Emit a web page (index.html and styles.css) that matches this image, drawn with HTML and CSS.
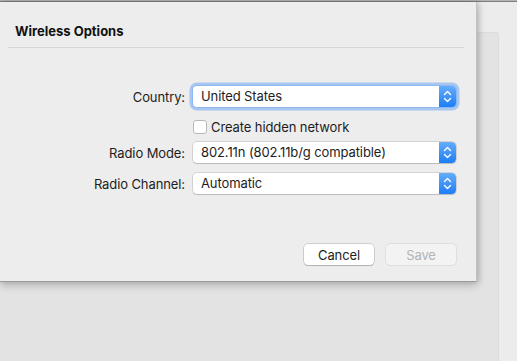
FILE: index.html
```html
<!DOCTYPE html>
<html>
<head>
<title>Wireless Options</title>
<link rel="stylesheet" href="styles.css">
</head>
<body>
    <div class="window">
        <div class="window-content">
            <div class="panel"></div>
        </div>
    </div>

    <div class="sheet">
        <h1 class="sheet-title">Wireless Options</h1>
        <div class="separator"></div>

        <div class="form">
            <div class="row row-country">
                <label class="label">Country:</label>
                <div class="popup focused">
                    <span class="popup-value">United States</span>
                    <span class="popup-arrows">
                        <svg width="17" height="21" viewBox="0 0 17 21"><path d="M5.5 8.5 L8.5 5.5 L11.5 8.5 M5.5 12.5 L8.5 15.5 L11.5 12.5" fill="none" stroke="#fff" stroke-width="1.4" stroke-linecap="round" stroke-linejoin="round"/></svg>
                    </span>
                </div>
            </div>
            <div class="row row-check">
                <span class="label"></span>
                <label class="check">
                    <span class="checkbox"></span>
                    <span>Create hidden network</span>
                </label>
            </div>
            <div class="row row-mode">
                <label class="label">Radio Mode:</label>
                <div class="popup">
                    <span class="popup-value">802.11n (802.11b/g compatible)</span>
                    <span class="popup-arrows">
                        <svg width="17" height="21" viewBox="0 0 17 21"><path d="M5.5 8.5 L8.5 5.5 L11.5 8.5 M5.5 12.5 L8.5 15.5 L11.5 12.5" fill="none" stroke="#fff" stroke-width="1.4" stroke-linecap="round" stroke-linejoin="round"/></svg>
                    </span>
                </div>
            </div>
            <div class="row row-channel">
                <label class="label">Radio Channel:</label>
                <div class="popup">
                    <span class="popup-value">Automatic</span>
                    <span class="popup-arrows">
                        <svg width="17" height="21" viewBox="0 0 17 21"><path d="M5.5 8.5 L8.5 5.5 L11.5 8.5 M5.5 12.5 L8.5 15.5 L11.5 12.5" fill="none" stroke="#fff" stroke-width="1.4" stroke-linecap="round" stroke-linejoin="round"/></svg>
                    </span>
                </div>
            </div>
        </div>

        <div class="buttons">
            <button class="button">Cancel</button>
            <button class="button disabled" disabled>Save</button>
        </div>
    </div>
</body>
</html>
```

FILE: styles.css
```css
/**
 * Generic styles
 */
* {
    box-sizing: border-box;
}
body {
    margin: 0;
    width: 517px;
    height: 361px;
    overflow: hidden;
    background-color: #ececec;
    font-family: "Inter", "Liberation Sans", sans-serif;
    font-size: 13px;
    letter-spacing: -0.1px;
    color: #1d1d1d;
}

/**
 * Window behind the sheet
 */
.window {
    height: 361px;
    border-top: 1px solid #b4b4b4;
    box-shadow: inset 0 1px 0 #808080;
}
.window-content {
    padding: 31px 18px 0 0;
}
.panel {
    height: 330px;
    background-color: #e3e3e3;
    border-top: 1px solid #dcdcdc;
    border-right: 1px solid #dcdcdc;
    border-radius: 0 4px 0 0;
}

/**
 * The sheet lies over the window
 */
.sheet {
    position: absolute;
    left: 0;
    top: 2px;
    width: 477px;
    height: 280px;
    background-color: #ededed;
    border-right: 1px solid #c2c2c2;
    border-bottom: 1px solid #9c9c9c;
    box-shadow: 0 3px 9px rgba(0, 0, 0, 0.22), 2px 0 5px rgba(0, 0, 0, 0.12);
}
.sheet-title {
    margin: 0;
    padding: 21px 15px 0;
    font-size: 13px;
    font-weight: 700;
    line-height: 16px;
    letter-spacing: 0;
    color: #111;
}
.separator {
    margin: 8px 12px 0 8px;
    height: 1px;
    background-color: #d6d6d6;
}

/**
 * Form rows
 */
.form {
    margin-top: 38px;
}
.row {
    display: grid;
    grid-template-columns: 185px 263px;
    column-gap: 8px;
    align-items: center;
}
.row-check {
    margin-top: 8px;
    height: 23px;
}
.row-mode {
    margin-top: 4px;
}
.row-channel {
    margin-top: 10px;
}
.label {
    text-align: right;
}

.popup {
    display: flex;
    height: 21px;
    background-color: #fff;
    border-radius: 4px;
    box-shadow: 0 0 0 0.5px rgba(0, 0, 0, 0.22), 0 1px 1px rgba(0, 0, 0, 0.12);
    overflow: hidden;
}
.popup.focused {
    overflow: visible;
    box-shadow: 0 0 0 1px #8db8f3, 0 0 0 3.5px rgba(112, 166, 240, 0.55);
}
.popup-value {
    flex: 1;
    padding: 0 8px;
    line-height: 21px;
    white-space: nowrap;
}
.popup-arrows {
    width: 17px;
    display: flex;
    background: linear-gradient(#66acfb, #1c7ef8);
    border-radius: 0 4px 4px 0;
}

.check {
    display: flex;
    align-items: center;
    gap: 4px;
}
.checkbox {
    width: 14px;
    height: 14px;
    background-color: #fff;
    border: 1px solid #b9b9b9;
    border-radius: 3px;
}

/**
 * Bottom buttons
 */
.buttons {
    display: flex;
    justify-content: flex-end;
    gap: 12px;
    margin-top: 50px;
    padding-right: 20px;
}
.button {
    width: 70px;
    height: 21px;
    padding: 0;
    font-family: inherit;
    font-size: 13px;
    letter-spacing: inherit;
    color: #1d1d1d;
    background-color: #fff;
    border: none;
    border-radius: 4px;
    box-shadow: 0 0 0 0.5px rgba(0, 0, 0, 0.25), 0 1px 1px rgba(0, 0, 0, 0.15);
}
.button.disabled {
    color: #b3b3b3;
    background-color: #f3f3f3;
    box-shadow: 0 0 0 0.5px rgba(0, 0, 0, 0.12);
}
```
